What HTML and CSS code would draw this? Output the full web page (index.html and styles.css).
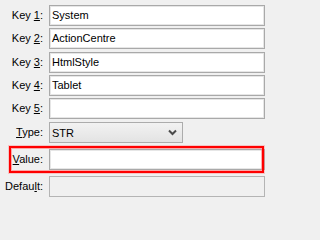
FILE: index.html
```html
<!DOCTYPE html>
<html>
<head>
<meta charset="utf-8">
<link rel="stylesheet" href="styles.css">
</head>
<body>
<div class="form">
  <div class="row r-first"><label class="lbl">Key <u>1</u>:</label><div class="field">System</div></div>
  <div class="row r2"><label class="lbl">Key <u>2</u>:</label><div class="field">ActionCentre</div></div>
  <div class="row r3"><label class="lbl">Key <u>3</u>:</label><div class="field">HtmlStyle</div></div>
  <div class="row r2"><label class="lbl">Key <u>4</u>:</label><div class="field">Tablet</div></div>
  <div class="row r2"><label class="lbl">Key <u>5</u>:</label><div class="field"></div></div>
  <div class="row r3"><label class="lbl"><u>T</u>ype:</label>
    <div class="select"><span>STR</span>
      <svg class="chev" width="9" height="7" viewBox="0 0 9 7"><polyline points="1,1.5 4.5,5 8,1.5" fill="none" stroke="#4a4a4a" stroke-width="2"/></svg>
    </div>
  </div>
  <div class="row r6 value-row"><label class="lbl"><u>V</u>alue:</label><div class="field"></div>
    <div class="highlight"></div>
  </div>
  <div class="row r6"><label class="lbl">Defau<u>l</u>t:</label><div class="field disabled"></div></div>
</div>
</body>
</html>
```
FILE: styles.css
```css
html, body {
  margin: 0;
  padding: 0;
  background: #f0f0f0;
  width: 266px;
  height: 202px;
  overflow: hidden;
}
.form {
  display: flex;
  flex-direction: column;
  padding-top: 5px;
  font-family: "Liberation Sans", Arial, sans-serif;
  font-size: 11px;
  color: #000;
}
.row {
  display: grid;
  grid-template-columns: 43px 216px;
  column-gap: 6px;
  height: 21px;
  align-items: center;
}
.r2 { margin-top: 2px; }
.r3 { margin-top: 3px; }
.r6 { margin-top: 6px; }
.lbl {
  text-align: right;
  white-space: nowrap;
  line-height: 21px;
}
.lbl u {
  text-underline-offset: 1px;
}
.field {
  box-sizing: border-box;
  height: 21px;
  background: #fff;
  border: 1px solid #a9a9a9;
  box-shadow: inset 0 0 0 1px #e6e6e6;
  padding-left: 2px;
  line-height: 19px;
  white-space: nowrap;
}
.field.disabled {
  background: #f0f0f0;
  border-color: #b4b4b4;
  box-shadow: none;
}
.select {
  box-sizing: border-box;
  width: 134px;
  height: 21px;
  border: 1px solid #acacac;
  background: linear-gradient(#f2f2f2, #e3e3e3);
  display: flex;
  align-items: center;
  justify-content: space-between;
  padding: 0 5px 0 2px;
}
.chev {
  display: block;
}
.value-row {
  position: relative;
}
.highlight {
  position: absolute;
  left: 9px;
  top: -3px;
  width: 255px;
  height: 27px;
  box-sizing: border-box;
  border: 2px solid #ff0000;
  box-shadow: inset 0 0 0 1px rgba(255, 120, 120, 0.6), 0 0 0 1px rgba(255, 120, 120, 0.35);
  pointer-events: none;
}
```
